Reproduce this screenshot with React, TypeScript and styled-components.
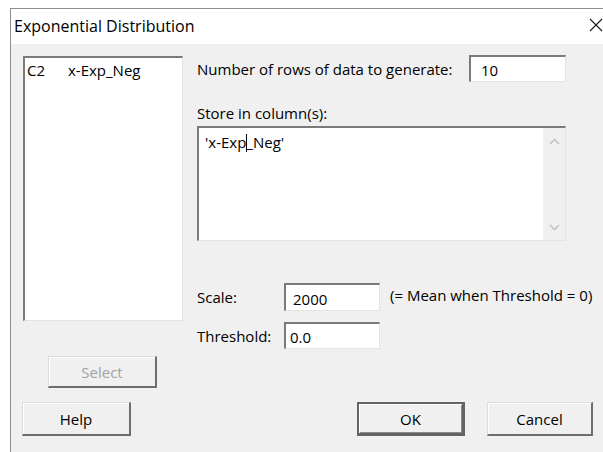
import React from "react";
import styled, { createGlobalStyle, css } from "styled-components";

const GlobalStyle = createGlobalStyle`
  html, body {
    margin: 0;
    padding: 0;
    background: #ffffff;
    overflow: hidden;
  }
  body {
    font-family: "Open Sans", "Noto Sans", "Liberation Sans", sans-serif;
    font-size: 15px;
    color: #000;
  }
`;

const Window = styled.div`
  margin: 8px 0 0 10px;
  width: 600px;
  height: 444px;
  border-top: 1px solid #8e8e8e;
  border-left: 1px solid #8e8e8e;
  display: flex;
  flex-direction: column;
  box-sizing: border-box;
`;

const TitleBar = styled.div`
  height: 35px;
  background: #ffffff;
  display: flex;
  align-items: center;
  padding-left: 3px;
  flex-shrink: 0;
`;

const Title = styled.span`
  font-size: 16px;
  color: #000;
  padding-bottom: 2px;
`;

const CloseButton = styled.div`
  margin-left: auto;
  width: 28px;
  height: 35px;
  display: flex;
  align-items: center;
  justify-content: center;
  padding-bottom: 3px;
  box-sizing: border-box;
`;

const Body = styled.div`
  flex: 1;
  background: #f0f0f0;
  padding: 12px 0 0 12px;
  display: flex;
  flex-direction: column;
`;

const TopSection = styled.div`
  display: flex;
`;

const LeftColumn = styled.div`
  width: 160px;
  display: flex;
  flex-direction: column;
`;

const sunken = css`
  box-sizing: border-box;
  background: #ffffff;
  border-style: solid;
  border-width: 2px 1px 1px 2px;
  border-color: #7a7a7a #e3e3e3 #e3e3e3 #7a7a7a;
`;

const ListBox = styled.div`
  ${sunken};
  height: 265px;
  padding: 2px 0 0 2px;
`;

const ListRow = styled.div`
  display: flex;
  line-height: 20px;
`;

const ListCell = styled.span<{ $w?: number }>`
  width: ${(p) => (p.$w ? `${p.$w}px` : "auto")};
`;

const RightColumn = styled.div`
  margin-left: 14px;
  margin-top: -1px;
  width: 369px;
  display: flex;
  flex-direction: column;
`;

const FieldRow = styled.div<{ $top?: number }>`
  display: flex;
  align-items: center;
  margin-top: ${(p) => p.$top ?? 0}px;
`;

const Label = styled.span<{ $w?: number }>`
  width: ${(p) => (p.$w ? `${p.$w}px` : "auto")};
  flex-shrink: 0;
  white-space: nowrap;
`;

const TextBox = styled.div<{ $w: number; $h: number; $indent?: number }>`
  ${sunken};
  width: ${(p) => p.$w}px;
  height: ${(p) => p.$h}px;
  padding: 2px 0 0 ${(p) => p.$indent ?? 6}px;
  display: flex;
  align-items: center;
  flex-shrink: 0;
`;

const Note = styled.span`
  margin-left: 10px;
  margin-top: -4px;
  white-space: nowrap;
`;

const SectionLabel = styled.div`
  margin-top: 21px;
  line-height: 20px;
`;

const MemoBox = styled.div`
  ${sunken};
  margin-top: 3px;
  height: 115px;
  display: flex;
`;

const MemoText = styled.div`
  flex: 1;
  padding: 4px 0 0 6px;
  line-height: 20px;
`;

const Caret = styled.span`
  display: inline-block;
  width: 1px;
  height: 18px;
  margin-right: -1px;
  background: #000;
  vertical-align: -4px;
`;

const ScrollTrack = styled.div`
  width: 22px;
  background: #f0f0f0;
  display: flex;
  flex-direction: column;
  justify-content: space-between;
  align-items: center;
  padding: 10px 0 9px;
`;

const Button = styled.div<{ $w: number; $default?: boolean; $disabled?: boolean; $left?: number }>`
  box-sizing: border-box;
  width: ${(p) => p.$w}px;
  height: 33px;
  margin-left: ${(p) => p.$left ?? 0}px;
  background: #f0f0f0;
  display: flex;
  align-items: center;
  justify-content: center;
  color: ${(p) => (p.$disabled ? "#a3a3a3" : "#000")};
  border-style: solid;
  border-width: 1px 2px 2px 1px;
  border-color: #dcdcdc #6e6e6e #6e6e6e #dcdcdc;
  box-shadow: inset 1px 1px #ffffff;
  ${(p) =>
    p.$default &&
    css`
      border-width: 2px 3px 3px 2px;
      border-color: #646464;
      box-shadow: inset 1px 1px #ffffff, inset -1px -1px #8a8a8a;
    `}
`;

const SelectButton = styled(Button)`
  margin-top: 35px;
  height: 32px;
`;

const ButtonRow = styled.div`
  display: flex;
  margin-top: 14px;
  margin-left: -1px;
  & > * {
    height: 34px;
  }
`;

const Chevron = ({ down }: { down?: boolean }) => (
  <svg width="11" height="7" viewBox="0 0 11 7">
    <path
      d={down ? "M1 1 L5.5 5.5 L10 1" : "M1 6 L5.5 1.5 L10 6"}
      fill="none"
      stroke="#c2c2c2"
      strokeWidth="1.6"
    />
  </svg>
);

export default function App() {
  return (
    <>
      <GlobalStyle />
      <Window>
        <TitleBar>
          <Title>Exponential Distribution</Title>
          <CloseButton>
            <svg width="14" height="14" viewBox="0 0 14 14">
              <path d="M1 1 L13 13 M13 1 L1 13" stroke="#1a1a1a" strokeWidth="1.1" />
            </svg>
          </CloseButton>
        </TitleBar>
        <Body>
          <TopSection>
            <LeftColumn>
              <ListBox>
                <ListRow>
                  <ListCell $w={41}>C2</ListCell>
                  <ListCell>x-Exp_Neg</ListCell>
                </ListRow>
              </ListBox>
              <SelectButton $w={109} $left={25} $disabled>
                Select
              </SelectButton>
            </LeftColumn>
            <RightColumn>
              <FieldRow>
                <Label $w={272}>Number of rows of data to generate:</Label>
                <TextBox $w={97} $h={27} $indent={10}>
                  10
                </TextBox>
              </FieldRow>
              <SectionLabel>Store in column(s):</SectionLabel>
              <MemoBox>
                <MemoText>
                  'x-Exp<Caret />_Neg'
                </MemoText>
                <ScrollTrack>
                  <Chevron />
                  <Chevron down />
                </ScrollTrack>
              </MemoBox>
              <FieldRow $top={42}>
                <Label $w={87}>Scale:</Label>
                <TextBox $w={96} $h={28} $indent={7}>
                  2000
                </TextBox>
                <Note>(= Mean when Threshold = 0)</Note>
              </FieldRow>
              <FieldRow $top={11}>
                <Label $w={87}>Threshold:</Label>
                <TextBox $w={96} $h={27} $indent={4}>
                  0.0
                </TextBox>
              </FieldRow>
            </RightColumn>
          </TopSection>
          <ButtonRow>
            <Button $w={109}>Help</Button>
            <Button $w={108} $left={226} $default>
              OK
            </Button>
            <Button $w={106} $left={22}>
              Cancel
            </Button>
          </ButtonRow>
        </Body>
      </Window>
    </>
  );
}
